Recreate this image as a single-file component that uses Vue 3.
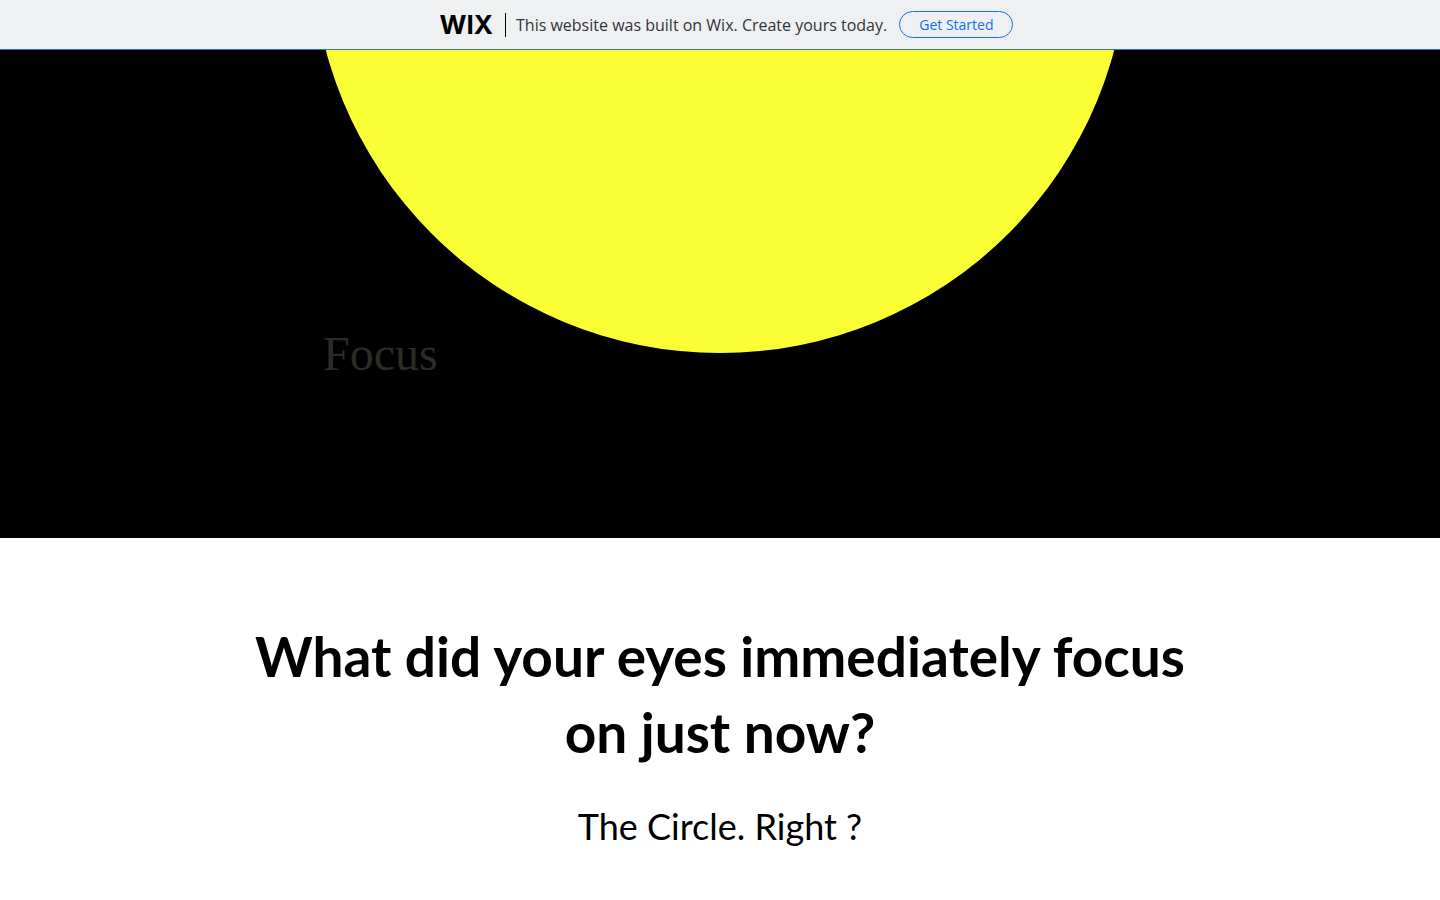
<script setup>
const banner = {
  brand: 'WIX',
  message: 'This website was built on Wix. Create yours today.',
  action: 'Get Started',
}
</script>

<template>
  <div class="page">
    <header class="banner">
      <span class="brand">{{ banner.brand }}</span>
      <span class="divider" aria-hidden="true"></span>
      <span class="message">{{ banner.message }}</span>
      <a class="action" href="#start">{{ banner.action }}</a>
    </header>

    <main>
      <section class="hero">
        <div class="circle" aria-hidden="true"></div>
        <h1 class="title">Focus</h1>
      </section>

      <section class="question">
        <h2>What did your eyes immediately focus on just now?</h2>
        <p>The Circle. Right ?</p>
      </section>
    </main>
  </div>
</template>

<style>
body {
  margin: 0;
  background: #fff;
}
</style>

<style scoped>
.page {
  overflow: hidden;
  font-family: Lato, "Open Sans", sans-serif;
  color: #000;
}

.banner {
  display: flex;
  align-items: center;
  justify-content: center;
  box-sizing: border-box;
  height: 50px;
  padding-left: 13px;
  border-bottom: 1px solid #2b6fd6;
  background: #eff0f2;
}

.brand {
  font: 700 26px/32px Inter, sans-serif;
}

.divider {
  width: 1px;
  height: 24px;
  margin: 0 10px 0 12px;
  background: #000;
}

.message {
  font: 400 16px/24px "Open Sans", sans-serif;
  color: #32343a;
}

.action {
  box-sizing: border-box;
  margin-left: 12px;
  padding: 0 19px;
  border: 1px solid #116dff;
  border-radius: 14px;
  font: 400 14px/25px "Open Sans", sans-serif;
  color: #116dff;
  text-decoration: none;
}

.hero {
  position: relative;
  height: 488px;
  overflow: hidden;
  background: #000;
}

.circle {
  position: absolute;
  bottom: 185px;
  left: 50%;
  width: 816px;
  height: 816px;
  border-radius: 50%;
  background: #faff35;
  transform: translateX(-50%);
}

.title {
  position: relative;
  max-width: 794px;
  margin: 0 auto;
  padding-top: 276px;
  font: 400 48px/56px "Liberation Serif", serif;
  color: #2b2c27;
}

.question {
  max-width: 980px;
  margin: 0 auto;
  padding: 80px 0 48px;
  text-align: center;
}

h2 {
  margin: 0;
  font-size: 55px;
  font-weight: 700;
  line-height: 76px;
}

p {
  margin: 32px 0 0;
  font-size: 36px;
  line-height: 48px;
}
</style>
